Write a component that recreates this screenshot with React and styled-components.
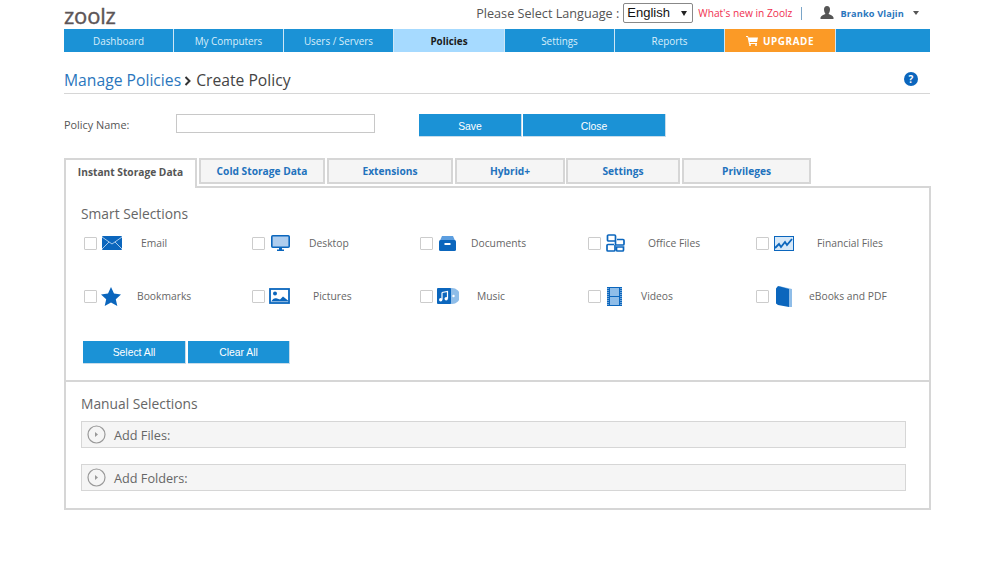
import React from "react";
import styled, { createGlobalStyle } from "styled-components";

const Global = createGlobalStyle`
  html, body { margin: 0; padding: 0; background: #fff; }
  body { font-family: "Open Sans", "Liberation Sans", sans-serif; color: #555; }
  * { box-sizing: border-box; }
`;

const Page = styled.div`width: 866px; margin-left: 64px;`;

const Header = styled.header`
  height: 29px; display: flex; align-items: flex-start; justify-content: space-between;
`;
const Logo = styled.div`
  font-family: "Open Sans", sans-serif; font-size: 22px; line-height: 28px; color: #5c5557;
  letter-spacing: -0.2px; margin-top: 1px; -webkit-text-stroke: .4px #5c5557;
`;
const HeaderRight = styled.div`display: flex; align-items: center; height: 26px; margin-right: 11px;`;
const LangLabel = styled.span`font-size: 12.65px; color: #555; margin-right: 4px;`;
const LangSelect = styled.div`
  width: 70px; height: 20px; border: 1px solid #888; border-radius: 2px; background: #fff;
  font-family: "Liberation Sans", sans-serif; font-size: 13px; color: #111; line-height: 18px;
  padding-left: 3px; display: flex; justify-content: space-between; align-items: center; padding-right: 5px;
`;
const Caret = styled.span`
  width: 0; height: 0; border-left: 3px solid transparent; border-right: 3px solid transparent;
  border-top: 5px solid ${p => p.$c || "#222"};
`;
const WhatsNew = styled.a`font-size: 10.2px; color: #f0304f; margin-left: 5px;`;
const Pipe = styled.span`width: 1px; height: 13px; background: #7aa5c8; margin-left: 9px;`;
const UserIcon = styled.svg`width: 14px; height: 14px; margin-left: 18px;`;
const UserName = styled.a`font-size: 9.2px; font-weight: 700; color: #2a76bd; margin-left: 6px; letter-spacing: .15px;`;
const UserCaret = styled(Caret)`margin-left: 9px; border-left-width: 3.5px; border-right-width: 3.5px; border-top-width: 4px; border-top-color: #555;`;

const Nav = styled.nav`display: flex; height: 23px; background: #1b92d6;`;
const NavItem = styled.a`
  width: ${p => p.$w || 110}px; height: 23px; display: flex; align-items: center; justify-content: center; gap: 5px;
  font-size: 9.9px; color: ${p => p.$active ? "#1a1a1a" : "#d9eefa"};
  font-weight: ${p => (p.$active || p.$upgrade) ? 700 : 400};
  letter-spacing: ${p => p.$upgrade ? ".6px" : "0"};
  background: ${p => p.$active ? "#a6daff" : p.$upgrade ? "#fb9a26" : "#1b92d6"};
  border-right: 1px solid #cfe6f5;
  ${p => p.$upgrade && "color: #fff;"}
  ${p => p.$last && "border-right: 0; flex: 1;"}
`;

const TitleRow = styled.div`
  height: 42px; border-bottom: 1px solid #d6d6d6; display: flex;
  align-items: flex-end; justify-content: space-between; padding-bottom: 1px;
`;
const Title = styled.h1`margin: 0; font-weight: 400; font-size: 15.7px; line-height: 24px; color: #444; display: flex; align-items: center;`;
const TitleLink = styled.a`color: #2a76bd;`;
const Chevron = styled.svg`width: 8px; height: 10px; margin: 2px 4px 0 3px;`;
const Help = styled.span`
  width: 14px; height: 14px; border-radius: 50%; background: #0b66bd; color: #fff; font-weight: 700;
  font-size: 10px; display: flex; align-items: center; justify-content: center; margin: 0 12px 6px 0;
`;

const PolicyRow = styled.div`display: flex; align-items: flex-start; margin-top: 20px; height: 23px;`;
const PolicyLabel = styled.label`width: 112px; font-size: 10.9px; line-height: 22px; color: #555;`;
const NameInput = styled.input`
  width: 199px; height: 19px; border: 1px solid #c8c8c8; background: #fff; margin: 0 44px 0 0; padding: 0;
`;
const Btn = styled.button`
  width: ${p => p.$w}px; height: 23px; background: #1b92d6; color: #fff; border: 1px solid #c8dcea;
  border-width: 0 1px 1px 0; padding: 3px 0 0; margin: 0 1px 0 0;
  font-family: "Liberation Sans", sans-serif; font-size: 10.4px; line-height: 19px;
`;

const Tabs = styled.div`display: flex; gap: 2px; margin-top: 21px; height: 30px; position: relative; z-index: 1;`;
const Tab = styled.a`
  width: ${p => p.$w}px; height: ${p => p.$active ? 30 : 26}px; display: flex; align-items: center; justify-content: center;
  font-size: 10.2px; font-weight: 700; color: ${p => p.$active ? "#555" : "#2272bd"};
  background: ${p => p.$active ? "#fff" : "#f5f5f5"};
  border: 2px solid #d6d6d6; ${p => p.$active && "border-bottom: 0; padding-bottom: 4px;"}
  margin-left: ${p => p.$ml || 0}px;
`;
const Panel = styled.div`
  width: 867px; height: 324px; margin-top: -2px; border: 2px solid #d6d6d6;
  display: flex; flex-direction: column;
`;
const Smart = styled.section`height: 194px; border-bottom: 2px solid #d6d6d6; padding: 16px 0 0 15px;`;
const SectionTitle = styled.h2`margin: 0; font-weight: 400; font-size: 13.8px; line-height: 20px; color: #666;`;
const Grid = styled.div`
  display: grid; grid-template-columns: repeat(5, 168px); grid-auto-rows: 53px; margin-top: 7px;
`;
const Item = styled.div`display: flex; align-items: center; height: 24px; padding-left: 3px;`;
const Check = styled.span`width: 13px; height: 13px; border: 1px solid #ccc; border-radius: 1px; background: #fff; flex: none;`;
const IconWrap = styled.span`
  display: flex; margin-left: ${p => p.$ml}px; width: ${p => p.$w}px; height: 20px; align-items: center; justify-content: center; flex: none;
`;
const ItemLabel = styled.span`margin-left: ${p => p.$ml}px; font-size: 10.3px; color: #666; white-space: nowrap;`;
const SelectBtns = styled.div`display: flex; gap: 2px; margin: 4px 0 0 2px;`;
const SelBtn = styled(Btn)`margin: 0; padding-top: 1px;`;

const Manual = styled.section`padding: 12px 0 0 15px;`;
const Accordion = styled.div`
  width: 825px; height: 27px; margin-top: ${p => p.$mt}px; background: #f5f5f5; border: 1px solid #d6d6d6;
  display: flex; align-items: center; padding-left: 5px;
`;
const AccIcon = styled.svg`width: 19px; height: 19px;`;
const AccLabel = styled.span`font-size: 12.7px; color: #666; margin-left: 8px;`;

const blue = "#0b66bd", light = "#8fbde8";
const Svg = ({ w, h, children }) => <svg width={w} height={h} viewBox={`0 0 ${w} ${h}`}>{children}</svg>;

const icons = {
  email: <Svg w={20} h={14}><rect width="20" height="14" rx="1" fill={blue} /><path d="M0 1l10 7 10-7M0 13l7-7M20 13l-7-7" stroke="#cfe3f7" strokeWidth=".8" fill="none" /></Svg>,
  desktop: <Svg w={19} h={16}><rect x=".8" y=".8" width="17.4" height="11.4" rx="1" fill="#aecdee" stroke={blue} strokeWidth="1.6" /><path d="M8 13h3v1.500h2V16H6v-1.500h2z" fill={blue} /></Svg>,
  docs: <Svg w={17} h={16}><path d="M1 5.500L3 1h11l2 4.500z" fill="#5c9ee0" /><rect y="5" width="17" height="11" rx="1.500" fill={blue} /><rect x="5.500" y="8" width="6" height="2" fill="#fff" /></Svg>,
  office: <Svg w={19} h={18}><g fill="none" stroke={blue} strokeWidth="1.700"><path d="M9.500 7h-7a1 1 0 01-1-1V2a1 1 0 011-1h6a1 1 0 011 1v9" /><path d="M11 5.500h6a1 1 0 011 1V10a1 1 0 01-1 1h-7" /><path d="M8 10.500H2a1 1 0 00-1 1V16a1 1 0 001 1h6a1 1 0 001-1v-5" /><path d="M10 13h7.500v3a1 1 0 01-1 1h-5a1 1 0 01-1-1v-3" /></g></Svg>,
  finance: <Svg w={20} h={15}><rect x=".5" y=".5" width="19" height="14" fill="#d6e8f8" stroke={blue} /><path d="M1 12l4-4 2 3 4-5 2 3 5-6" stroke={blue} strokeWidth="1.800" fill="none" /></Svg>,
  star: <Svg w={20} h={19}><path d="M10 0l3 6.600 7 .8-5.200 4.800 1.500 6.800L10 15.500 3.700 19l1.500-6.800L0 7.400l7-.8z" fill={blue} /></Svg>,
  pictures: <Svg w={21} h={16}><rect x="1" y="1" width="19" height="14" fill="#fff" stroke={blue} strokeWidth="1.800" /><circle cx="6" cy="5.500" r="2" fill={blue} /><path d="M2 13.500c2-3 4-4 6-3l3 1 3-3 5 4v1z" fill={blue} /></Svg>,
  music: <Svg w={22} h={16}><path d="M13 0h2a8 8 0 010 16h-2z" fill="#8fbde8" /><rect width="14" height="16" rx="1" fill={blue} /><path d="M5 4.500L10.500 3.500v7" stroke="#fff" strokeWidth="1.200" fill="none" /><path d="M5 4.500v7" stroke="#fff" strokeWidth="1.200" /><circle cx="3.700" cy="11.800" r="1.700" fill="#fff" /><circle cx="9.200" cy="10.800" r="1.700" fill="#fff" /><circle cx="16.500" cy="8" r="1.200" fill="#fff" /></Svg>,
  videos: <Svg w={15} h={19}><rect width="15" height="19" fill={blue} /><rect x="3" y="1" width="9" height="8" fill={light} /><rect x="3" y="10" width="9" height="8" fill={light} /><path d="M1 1v17M14 1v17" stroke="#cfe3f7" strokeWidth="1" strokeDasharray="1 1" /></Svg>,
  ebooks: <Svg w={16} h={21}><path d="M3 0l13 3v18H13z" fill={light} /><path d="M0 2.500L2 0l11 3v18L2 19 0 17.500z" fill={blue} /></Svg>,
};

const items = [
  ["Email", "email", 5, 20, 19], ["Desktop", "desktop", 5, 20, 19], ["Documents", "docs", 5, 18, 15], ["Office Files", "office", 4, 20, 23], ["Financial Files", "finance", 4, 21, 23],
  ["Bookmarks", "star", 4, 20, 16], ["Pictures", "pictures", 4, 21, 23], ["Music", "music", 3, 23, 18], ["Videos", "videos", 4, 19, 17], ["eBooks and PDF", "ebooks", 6, 17, 17],
];
const tabs = [["Instant Storage Data", 133], ["Cold Storage Data", 126], ["Extensions", 126], ["Hybrid+", 110], ["Settings", 114, -1], ["Privileges", 129]];

const Play = () => (
  <AccIcon viewBox="0 0 19 19"><circle cx="9.500" cy="9.500" r="8.500" fill="none" stroke="#999" strokeWidth="1.200" /><path d="M8 7l3 2.500L8 12z" fill="#999" /></AccIcon>
);

export default function App() {
  return (
    <Page>
      <Global />
      <Header>
        <Logo>zoolz</Logo>
        <HeaderRight>
          <LangLabel>Please Select Language :</LangLabel>
          <LangSelect>English<Caret /></LangSelect>
          <WhatsNew>What's new in Zoolz</WhatsNew>
          <Pipe />
          <UserIcon viewBox="0 0 14 14"><path d="M7 0c2 0 3 1.500 3 3.500S9 7 8.500 8c1.500.7 4.500 1.500 5 3.500V13H.5v-1.500C1 9.500 4 8.700 5.500 8 5 7 4 5.500 4 3.500S5 0 7 0z" fill="#555" /></UserIcon>
          <UserName>Branko Vlajin</UserName>
          <UserCaret />
        </HeaderRight>
      </Header>
      <Nav>
        <NavItem>Dashboard</NavItem>
        <NavItem>My Computers</NavItem>
        <NavItem>Users / Servers</NavItem>
        <NavItem $active $w={111}>Policies</NavItem>
        <NavItem>Settings</NavItem>
        <NavItem>Reports</NavItem>
        <NavItem $upgrade $w={111}>
          <svg width="12" height="10" viewBox="0 0 12 10"><path d="M0 0h2l.5 1.500H12L11 6H3.500L4 7h7v1H3L1.500 1H0z" fill="#fff" /><circle cx="4" cy="9" r="1" fill="#fff" /><circle cx="10" cy="9" r="1" fill="#fff" /></svg>
          UPGRADE
        </NavItem>
        <NavItem $last />
      </Nav>
      <TitleRow>
        <Title>
          <TitleLink>Manage Policies</TitleLink>
          <Chevron viewBox="0 0 8 10"><path d="M1.500 1l4 4-4 4" stroke="#333" strokeWidth="2" fill="none" /></Chevron>
          Create Policy
        </Title>
        <Help>?</Help>
      </TitleRow>
      <PolicyRow>
        <PolicyLabel>Policy Name:</PolicyLabel>
        <NameInput />
        <Btn $w={103}>Save</Btn>
        <Btn $w={143}>Close</Btn>
      </PolicyRow>
      <Tabs>
        {tabs.map(([t, w, ml], i) => <Tab key={t} $w={w} $ml={ml} $active={i === 0}>{t}</Tab>)}
      </Tabs>
      <Panel>
        <Smart>
          <SectionTitle>Smart Selections</SectionTitle>
          <Grid>
            {items.map(([t, ic, ml, w, lm]) => (
              <Item key={t}>
                <Check />
                <IconWrap $ml={ml} $w={w}>{icons[ic]}</IconWrap>
                <ItemLabel $ml={lm}>{t}</ItemLabel>
              </Item>
            ))}
          </Grid>
          <SelectBtns>
            <SelBtn $w={103}>Select All</SelBtn>
            <SelBtn $w={102}>Clear All</SelBtn>
          </SelectBtns>
        </Smart>
        <Manual>
          <SectionTitle>Manual Selections</SectionTitle>
          <Accordion $mt={7}><Play /><AccLabel>Add Files:</AccLabel></Accordion>
          <Accordion $mt={16}><Play /><AccLabel>Add Folders:</AccLabel></Accordion>
        </Manual>
      </Panel>
    </Page>
  );
}
